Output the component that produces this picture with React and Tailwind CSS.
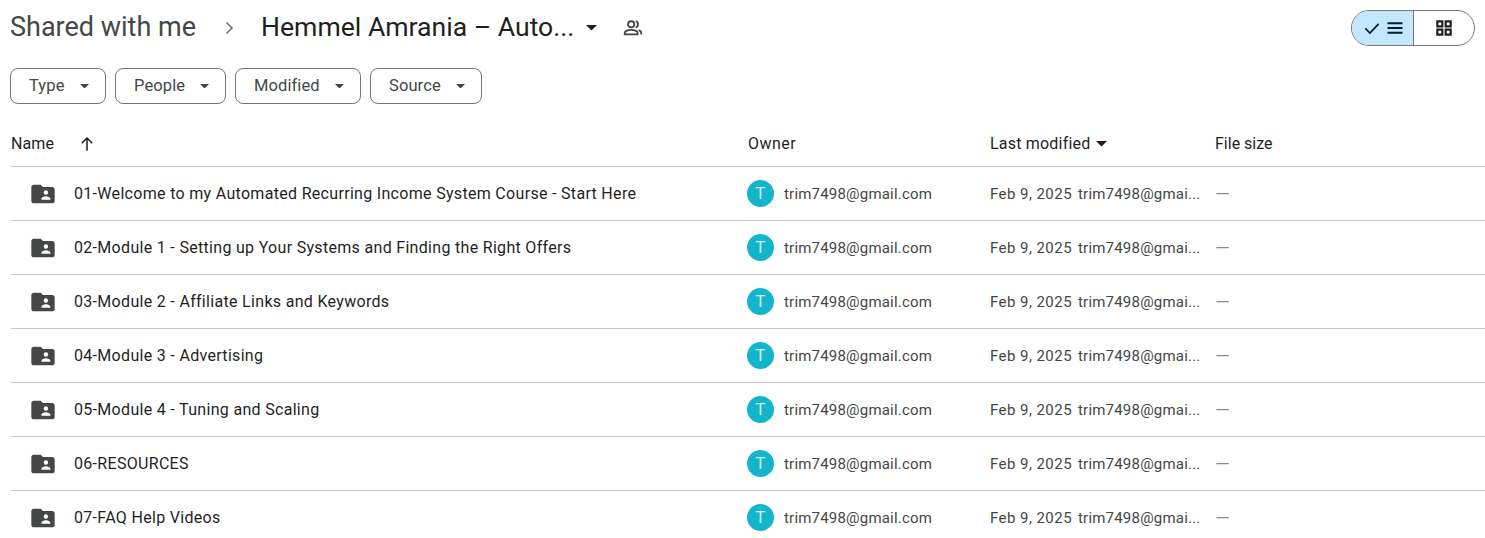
const font = { fontFamily: 'Roboto, sans-serif' };

const Caret = ({ className = '' }) => (
  <svg viewBox="0 0 10 5" className={className} fill="currentColor"><path d="M0 0h10L5 5z" /></svg>
);

const FolderShared = () => (
  <svg viewBox="0 0 24 24" className="w-[28px] h-[28px] text-[#444746]" fill="currentColor">
    <path d="M4 4h6l2 2h8c1.100 0 2 .9 2 2v10c0 1.100-.9 2-2 2H4c-1.100 0-2-.9-2-2V6c0-1.100.9-2 2-2z" />
    <circle cx="14.500" cy="10.700" r="1.900" fill="#fff" />
    <path d="M10.700 17v-.9c0-1.400 2.500-2.200 3.800-2.200s3.800.8 3.800 2.200v.9z" fill="#fff" />
  </svg>
);

const Filter = ({ label, w }) => (
  <button className={`h-[36px] ${w} flex items-center justify-between pl-[18px] pr-[16px] rounded-[8px] border border-[#747775] text-[#444746] text-[16.500px] tracking-[0.1px] bg-white`}>
    <span>{label}</span>
    <Caret className="w-[9px] h-[4.500px] text-[#444746]" />
  </button>
);

const rows = [
  '01-Welcome to my Automated Recurring Income System Course - Start Here',
  '02-Module 1 - Setting up Your Systems and Finding the Right Offers',
  '03-Module 2 - Affiliate Links and Keywords',
  '04-Module 3 - Advertising',
  '05-Module 4 - Tuning and Scaling',
  '06-RESOURCES',
  '07-FAQ Help Videos',
];

const cols = 'grid grid-cols-[737px_242px_225px_1fr]';

export default function App() {
  return (
    <div style={font} className="w-[1485px] h-[538px] overflow-hidden bg-white">
      <div className="h-[55px] flex items-center justify-between pl-[10px] pr-[10px]">
        <div className="flex items-center">
          <span className="text-[27px] text-[#444746] w-[188px] whitespace-nowrap">Shared with me</span>
          <svg viewBox="0 0 24 24" className="w-[24px] h-[24px] ml-[19px] text-[#747775]" fill="none" stroke="currentColor" strokeWidth="1.700"><path d="M9.500 6.500 15 12l-5.500 5.500" /></svg>
          <span className="text-[26.600px] text-[#1f1f1f] ml-[20px] w-[314px] -mt-[1px] whitespace-nowrap">Hemmel Amrania – Auto...</span>
          <Caret className="w-[11px] h-[5.500px] text-[#1f1f1f] ml-[11px]" />
          <svg viewBox="0 0 24 24" className="w-[22px] h-[22px] ml-[25px] text-[#444746]" fill="none" stroke="currentColor" strokeWidth="2">
            <circle cx="10" cy="8" r="3.400" />
            <path d="M3 19v-1.600c0-2 3.600-3.400 7-3.400s7 1.400 7 3.400V19z" />
            <path d="M15 4.600c1.500.5 2.400 1.800 2.400 3.400S16.500 10.900 15 11.400" />
            <path d="M18 14.200c1.800.6 3 1.600 3 3.200V19" />
          </svg>
        </div>
        <div className="flex h-[36px] w-[124px] rounded-full border border-[#747775] overflow-hidden">
          <div className="w-[62px] bg-[#c2e7ff] border-r border-[#747775] flex items-center justify-center gap-[3px] pl-[1px] text-[#001d35]">
            <svg viewBox="0 0 24 24" className="w-[20px] h-[20px]" fill="none" stroke="currentColor" strokeWidth="2"><path d="M4 12.500 9.500 18 20 7" /></svg>
            <svg viewBox="0 0 24 24" className="w-[20px] h-[20px]" fill="currentColor"><path d="M3 5h18v2.400H3zM3 10.800h18v2.400H3zM3 16.600h18V19H3z" /></svg>
          </div>
          <div className="flex-1 flex items-center justify-center text-[#1f1f1f]">
            <svg viewBox="0 0 24 24" className="w-[20px] h-[20px]" fill="none" stroke="currentColor" strokeWidth="2.600"><path d="M4 4h6v6H4zM14 4h6v6h-6zM4 14h6v6H4zM14 14h6v6h-6z" /></svg>
          </div>
        </div>
      </div>

      <div className="flex gap-[9px] pl-[10px] pt-[13px] h-[67px]">
        <Filter label="Type" w="w-[96px]" />
        <Filter label="People" w="w-[111px]" />
        <Filter label="Modified" w="w-[126px]" />
        <Filter label="Source" w="w-[112px]" />
      </div>

      <div className="ml-[11px]">
        <div className={`${cols} h-[45px] items-center border-b border-[#c7c7c7] text-[16px] text-[#1f1f1f]`}>
          <div className="flex items-center tracking-[0.1px]">
            <span>Name</span>
            <svg viewBox="0 0 24 24" className="w-[18px] h-[18px] ml-[24px]" fill="none" stroke="currentColor" strokeWidth="2"><path d="M12 21V4M5 11l7-7 7 7" /></svg>
          </div>
          <div className="tracking-[0.45px]">Owner</div>
          <div className="flex items-center tracking-[0.2px]">
            Last modified
            <Caret className="w-[11px] h-[5.500px] ml-[6px]" />
          </div>
          <div>File size</div>
        </div>
        {rows.map((name) => (
          <div key={name} className={`${cols} h-[54px] items-center border-b border-[#c7c7c7]`}>
            <div className="flex items-center pl-[18px]">
              <FolderShared />
              <span className="ml-[17px] pt-[1px] text-[16px] tracking-[0.31px] text-[#1f1f1f] whitespace-nowrap">{name}</span>
            </div>
            <div className="flex items-center text-[15px] tracking-[0.2px] text-[#444746]">
              <div className="w-[27px] h-[27px] -ml-[1px] rounded-full bg-[#12b5cb] text-[#cfeff4] text-[17px] flex items-center justify-center">T</div>
              <span className="ml-[10px] pt-[1px]">trim7498@gmail.com</span>
            </div>
            <div className="flex items-center pt-[1px] text-[15px] text-[#444746] whitespace-nowrap">
              <span className="tracking-[0.45px]">Feb 9, 2025</span>
              <span className="ml-[6px] tracking-[0.2px]">trim7498@gmai...</span>
            </div>
            <div className="text-[19px] pt-[2px] text-[#8a8c8b]">—</div>
          </div>
        ))}
      </div>
    </div>
  );
}
